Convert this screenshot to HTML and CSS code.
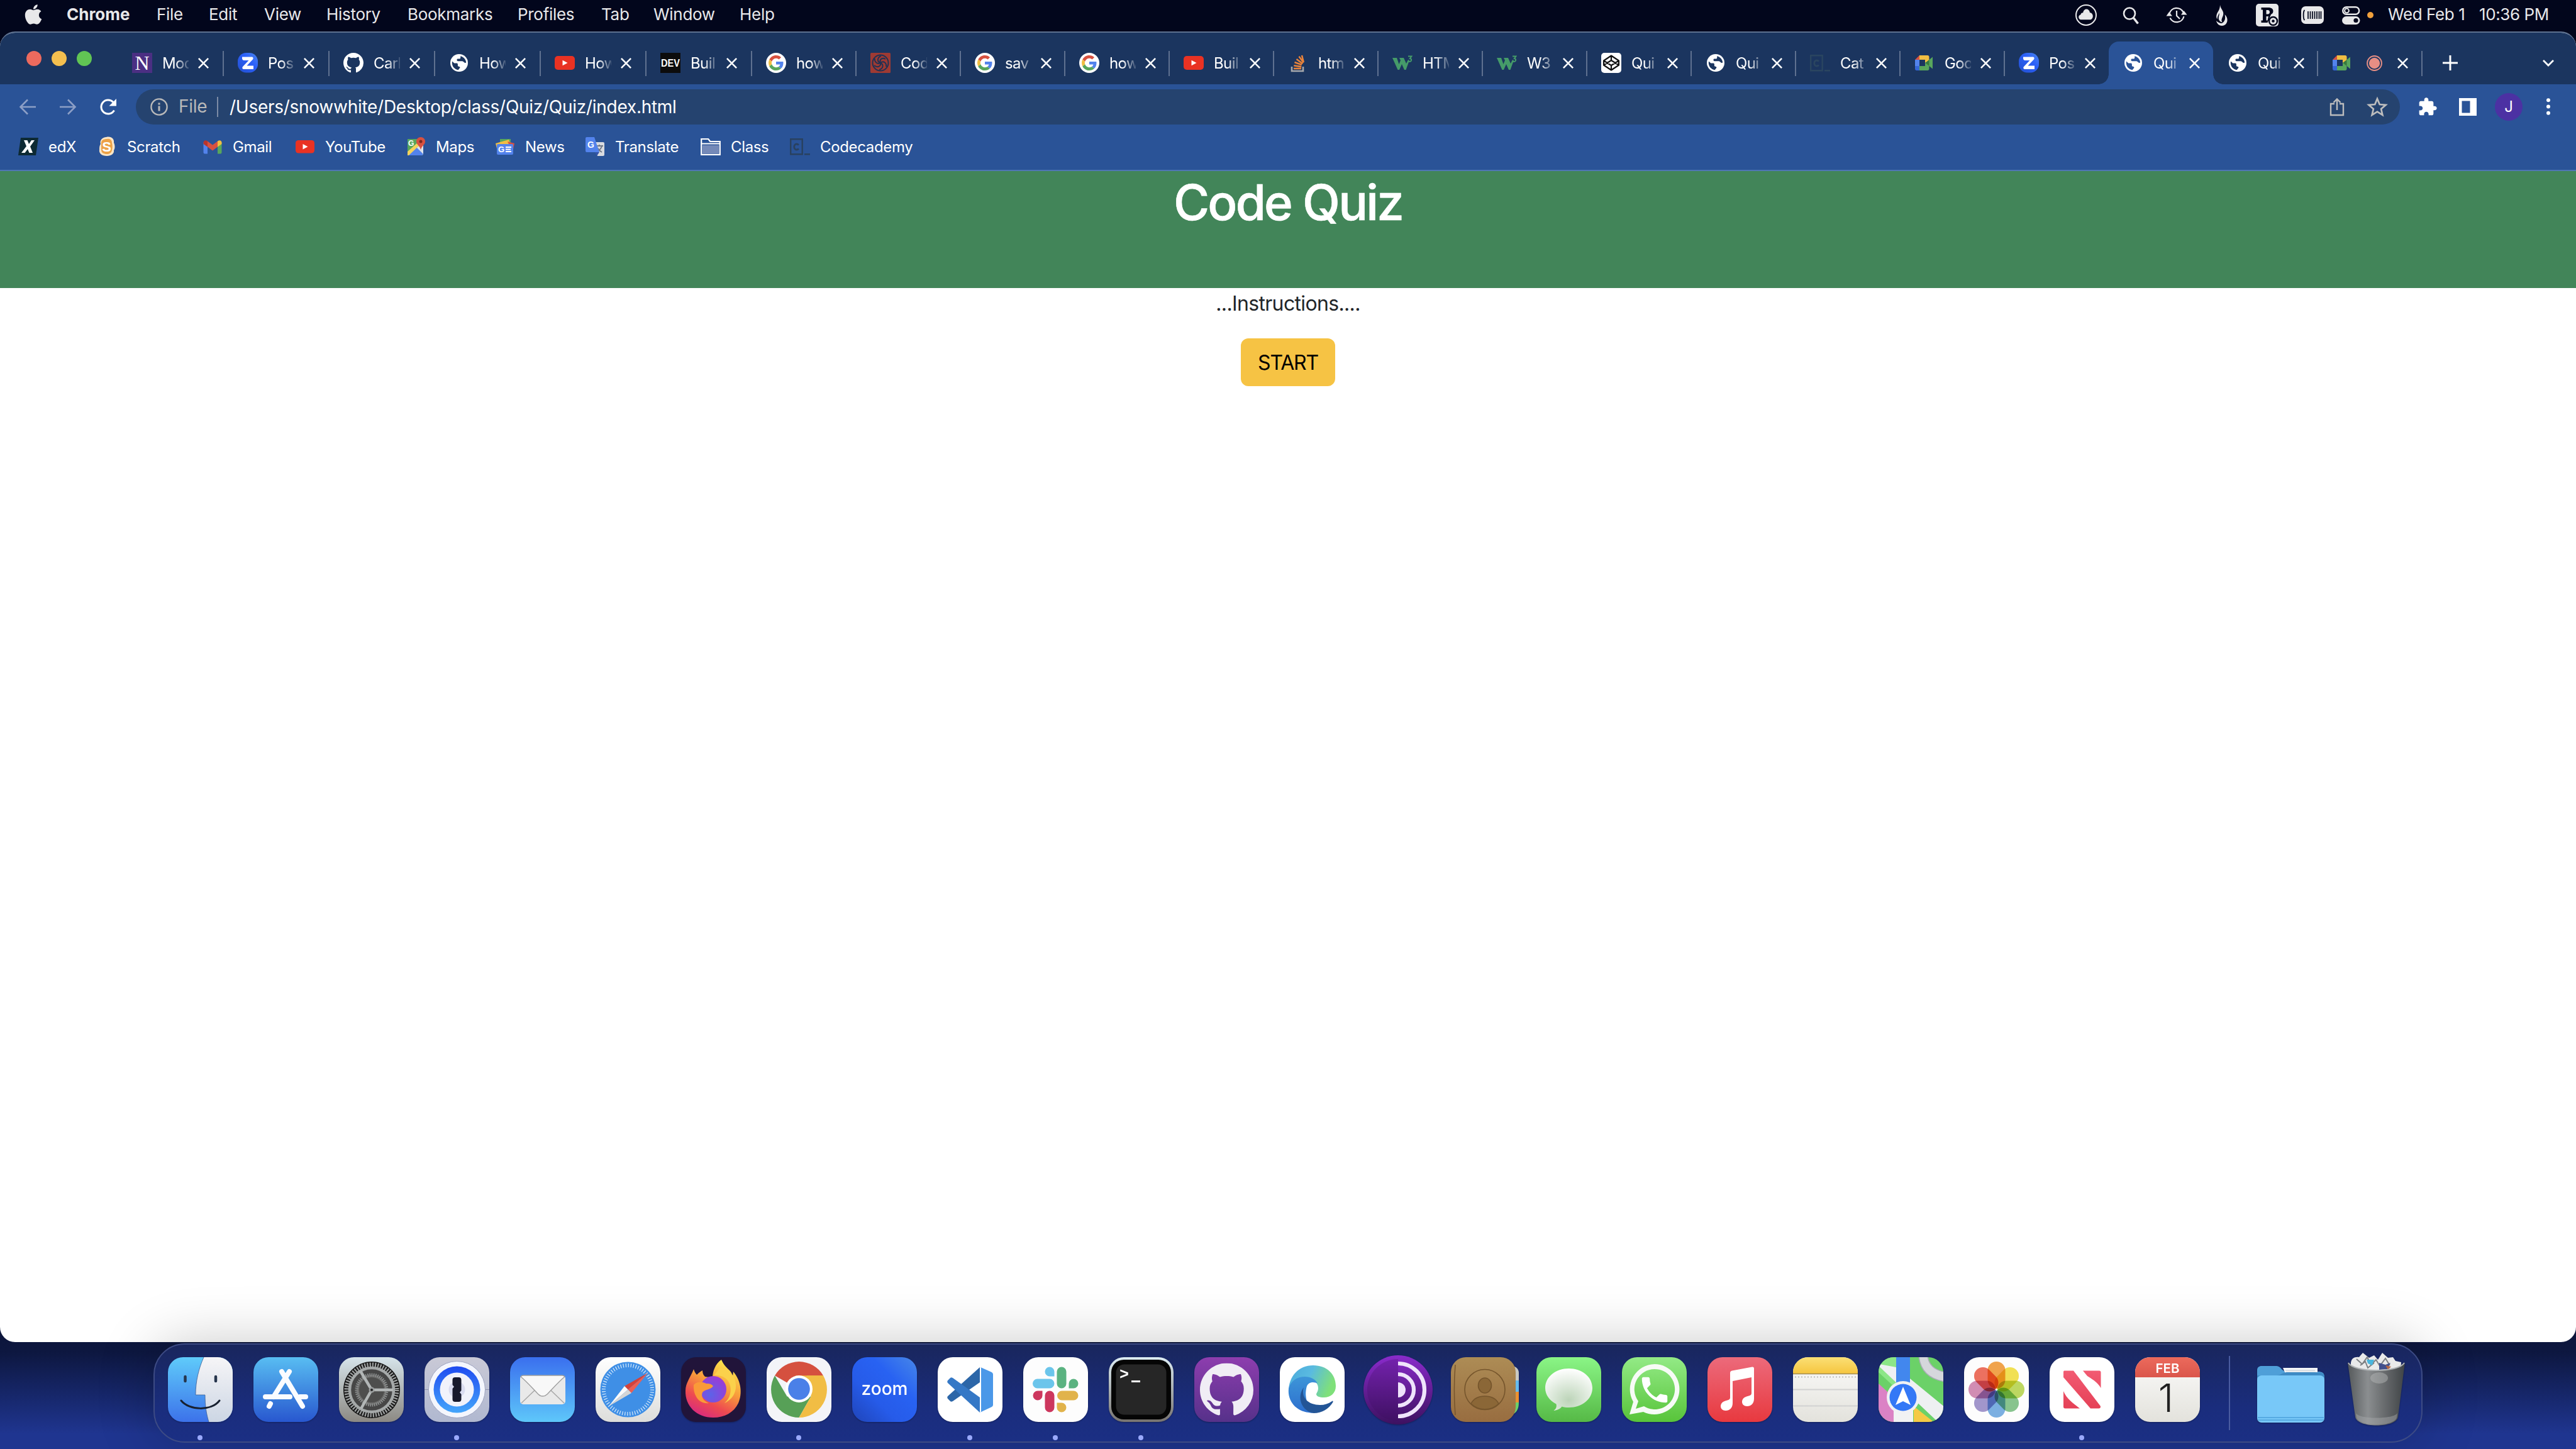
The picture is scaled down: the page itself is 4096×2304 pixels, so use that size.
FILE: index.html
```html
<!DOCTYPE html>
<html lang="en">
<head>
<meta charset="utf-8">
<title>Code Quiz</title>
<link rel="stylesheet" href="styles.css">
</head>
<body>
<svg class="defs" aria-hidden="true">
  <defs>
    <linearGradient id="gFinder" x1="0" y1="0" x2="0" y2="1"><stop offset="0" stop-color="#5fcbfa"/><stop offset="1" stop-color="#3c72ea"/></linearGradient>
    <linearGradient id="gFace" x1="0" y1="0" x2="0" y2="1"><stop offset="0" stop-color="#f6f5f7"/><stop offset="1" stop-color="#ccd6e4"/></linearGradient>
    <linearGradient id="gStore" x1="0" y1="0" x2="0" y2="1"><stop offset="0" stop-color="#58bdf2"/><stop offset="1" stop-color="#2857cf"/></linearGradient>
    <linearGradient id="gGear" x1="0" y1="0" x2="0" y2="1"><stop offset="0" stop-color="#d6e4ea"/><stop offset="1" stop-color="#8c8983"/></linearGradient>
    <linearGradient id="gPass" x1="0" y1="0" x2="0" y2="1"><stop offset="0" stop-color="#1f4bf0"/><stop offset="1" stop-color="#44a5fb"/></linearGradient>
    <linearGradient id="gPassBg" x1="0" y1="0" x2="0" y2="1"><stop offset="0" stop-color="#c9c9d6"/><stop offset="1" stop-color="#b0b8d0"/></linearGradient>
    <linearGradient id="gMail" x1="0" y1="0" x2="0" y2="1"><stop offset="0" stop-color="#3a6fee"/><stop offset="1" stop-color="#5ec7fa"/></linearGradient>
    <linearGradient id="gPaper" x1="0" y1="0" x2="0" y2="1"><stop offset="0" stop-color="#ffffff"/><stop offset="1" stop-color="#dddddb"/></linearGradient>
    <linearGradient id="gFox" x1=".8" y1="0" x2=".3" y2="1"><stop offset="0" stop-color="#fdf04f"/><stop offset=".45" stop-color="#f89a3b"/><stop offset=".75" stop-color="#ee4a50"/><stop offset="1" stop-color="#d82a80"/></linearGradient>
    <radialGradient id="gOrb" cx=".4" cy=".7" r=".8"><stop offset="0" stop-color="#5d62e8"/><stop offset="1" stop-color="#a436d2"/></radialGradient>
    <linearGradient id="gZed" x1="1" y1="0" x2="0" y2="1"><stop offset="0" stop-color="#4a86ee"/><stop offset=".4" stop-color="#2c60f8"/><stop offset="1" stop-color="#2350cf"/></linearGradient>
    <linearGradient id="gZoom" x1="1" y1="0" x2="0" y2="1"><stop offset="0" stop-color="#4787e8"/><stop offset=".35" stop-color="#2862f2"/><stop offset=".65" stop-color="#265be9"/><stop offset="1" stop-color="#1f44b8"/></linearGradient>
    <linearGradient id="gTerm" x1="0" y1="0" x2="0" y2="1"><stop offset="0" stop-color="#dcecf3"/><stop offset="1" stop-color="#77736f"/></linearGradient>
    <linearGradient id="gHub" x1="0" y1="0" x2="0" y2="1"><stop offset="0" stop-color="#8d3dae"/><stop offset="1" stop-color="#56318a"/></linearGradient>
    <linearGradient id="gEdge" x1="0" y1="0" x2="1" y2=".3"><stop offset="0" stop-color="#4aa9dc"/><stop offset=".5" stop-color="#5abbe0"/><stop offset="1" stop-color="#7fe07a"/></linearGradient>
    <linearGradient id="gEdge2" x1="0" y1="0" x2="0" y2="1"><stop offset="0" stop-color="#3d95d8"/><stop offset="1" stop-color="#2d6fce"/></linearGradient>
    <linearGradient id="gTor" x1="0" y1="0" x2="0" y2="1"><stop offset="0" stop-color="#8a2bcb"/><stop offset="1" stop-color="#3d1160"/></linearGradient>
    <linearGradient id="gBook" x1="0" y1="0" x2="0" y2="1"><stop offset="0" stop-color="#ad8c55"/><stop offset="1" stop-color="#986d40"/></linearGradient>
    <linearGradient id="gMsg" x1="0" y1="0" x2="0" y2="1"><stop offset="0" stop-color="#8af586"/><stop offset="1" stop-color="#56b946"/></linearGradient>
    <radialGradient id="gBubble" cx=".5" cy=".75" r=".75"><stop offset="0" stop-color="#bcd4b8"/><stop offset="1" stop-color="#ffffff"/></radialGradient>
    <linearGradient id="gWa" x1="0" y1="0" x2="0" y2="1"><stop offset="0" stop-color="#93ea86"/><stop offset="1" stop-color="#58c43a"/></linearGradient>
    <linearGradient id="gMusic" x1="0" y1="0" x2="0" y2="1"><stop offset="0" stop-color="#ec6a7b"/><stop offset="1" stop-color="#e8393f"/></linearGradient>
    <linearGradient id="gNote" x1="0" y1="0" x2="0" y2="1"><stop offset="0" stop-color="#fadf75"/><stop offset="1" stop-color="#f6c63f"/></linearGradient>
    <linearGradient id="gSheet" x1="0" y1="0" x2="0" y2="1"><stop offset="0" stop-color="#fbfbfa"/><stop offset="1" stop-color="#e3e2dc"/></linearGradient>
    <linearGradient id="gNews" x1="0" y1="0" x2="0" y2="1"><stop offset="0" stop-color="#f25b72"/><stop offset="1" stop-color="#e54157"/></linearGradient>
    <linearGradient id="gCal" x1="0" y1="0" x2="0" y2="1"><stop offset="0" stop-color="#ec6a5c"/><stop offset="1" stop-color="#da564b"/></linearGradient>
    <linearGradient id="gTrash" x1="0" y1="0" x2="1" y2="0"><stop offset="0" stop-color="#55595b"/><stop offset=".35" stop-color="#8b8e90"/><stop offset=".6" stop-color="#6d7072"/><stop offset="1" stop-color="#3f4346"/></linearGradient>
    <clipPath id="tile"><rect width="103" height="103" rx="24"/></clipPath>
  </defs>

  <symbol id="globe" viewBox="2 2 20 20"><circle cx="12" cy="12" r="10" fill="#fff"/><path class="hole" d="M11 20c-4-.5-7-3.900-7-8 0-.6.100-1.200.200-1.800L6.500 12.300H9c1 0 1.500.4 1.500 1.400v1.400c0 .7.400 1 1.200 1 .9 0 1.300.6 1.300 1.400zM9.500 8.600c0-.8.400-1.200 1.200-1.200h1.600c.8 0 1.300-.5 1.300-1.300V4.300c3.600.8 6.200 3.800 6.400 7.400-.8.500-1.500.5-2.200-.2l-1-1c-.4-.4-.8-.5-1.300-.5h-4.800c-.8 0-1.200-.5-1.200-1.400z"/></symbol>
  <symbol id="yt" viewBox="0 0 32 32"><rect y="5" width="32" height="22" rx="5" fill="#e93223"/><path d="M12.500 11.800v8.400l8-4.200z" fill="#fff"/></symbol>
  <symbol id="google" viewBox="0 0 32 32"><circle cx="16" cy="16" r="16" fill="#fff"/><g transform="translate(4 4)"><path fill="#d85140" d="M12 4.750c1.770 0 3.350.61 4.600 1.800l3.420-3.420C17.950 1.190 15.240 0 12 0 7.310 0 3.250 2.690 1.280 6.610l3.980 3.090C6.220 6.860 8.870 4.750 12 4.750z"/><path fill="#5383ec" d="M23.490 12.270c0-.79-.07-1.540-.19-2.270H12v4.510h6.470c-.29 1.480-1.140 2.730-2.400 3.580l3.860 3c2.260-2.090 3.560-5.170 3.560-8.820z"/><path fill="#f1be42" d="M5.270 14.290c-.25-.72-.38-1.490-.38-2.290s.14-1.570.38-2.290L1.280 6.610A11.900 11.900 0 0 0 0 12c0 1.940.46 3.770 1.280 5.390z"/><path fill="#58a65c" d="M12 24c3.240 0 5.950-1.060 7.930-2.910l-3.860-3c-1.080.72-2.450 1.160-4.070 1.160-3.130 0-5.780-2.110-6.730-4.960l-3.980 3.090C3.250 21.300 7.310 24 12 24z"/></g></symbol>
  <symbol id="octocat" viewBox="0 0 16 16"><path d="M8 0C3.580 0 0 3.580 0 8c0 3.540 2.290 6.530 5.470 7.590.4.07.55-.17.55-.38 0-.19-.01-.82-.01-1.490-2.010.37-2.530-.49-2.690-.94-.09-.23-.48-.94-.82-1.130-.28-.15-.68-.52-.01-.53.63-.01 1.080.58 1.230.82.72 1.210 1.870.87 2.330.66.07-.52.28-.87.51-1.070-1.780-.2-3.640-.89-3.640-3.950 0-.87.31-1.590.82-2.150-.08-.2-.36-1.020.08-2.120 0 0 .67-.21 2.200.82.64-.18 1.320-.27 2-.27s1.360.09 2 .27c1.530-1.040 2.200-.82 2.200-.82.44 1.100.16 1.920.08 2.120.51.56.82 1.270.82 2.150 0 3.070-1.870 3.750-3.650 3.950.29.25.54.73.54 1.480 0 1.070-.01 1.930-.01 2.200 0 .21.15.46.55.38A8.010 8.010 0 0 0 16 8c0-4.420-3.580-8-8-8z"/></symbol>
  <symbol id="zed" viewBox="0 0 32 32"><rect width="32" height="31.500" rx="13.500" fill="url(#gZed)"/><path d="M7 6.500h15c2.500 0 3.300 2 2 4L14.500 20.500H25v5.500H10c-2.500 0-3.500-2-2-4L17.500 12H10c-2 0-3-1.500-3-3z" fill="#fff"/></symbol>
  <symbol id="nw" viewBox="0 0 32 32"><rect width="32" height="32" fill="#4b2f83"/><text x="16" y="26.500" text-anchor="middle" font-family="Liberation Serif, serif" font-size="32" fill="#fff">N</text></symbol>
  <symbol id="dev" viewBox="0 0 32 32"><rect width="32" height="32" fill="#0c0c0c"/><text x="16" y="21.500" text-anchor="middle" textLength="30" lengthAdjust="spacingAndGlyphs" font-family="Liberation Sans, sans-serif" font-weight="700" font-size="16" fill="#fff">DEV</text></symbol>
  <symbol id="knot" viewBox="0 0 32 32"><rect width="32" height="32" rx="1.500" fill="#9e3a33"/><g fill="none" stroke="#1f3154" stroke-width="2"><circle cx="16" cy="16" r="12.500"/><path d="M16 16c-2-6 3-9 8-6M16 16c5-4 10 0 9 6M16 16c6 3 4 9-2 11M16 16c1 6-5 8-10 4M16 16c-5 3-10-2-9-7M16 16c-6-2-5-9 1-11"/></g></symbol>
  <symbol id="stack" viewBox="0 0 32 32"><path d="M6 22v7h18v-7" fill="none" stroke="#a7a9ac" stroke-width="2.600"/><g stroke="#e9833a" stroke-width="2.600"><path d="M9 25h12M9.300 20.300l12 1.800M10.500 15l11.300 4M13.500 10l9.800 7.200M17.500 5.800l7.200 9.700M22 4l2.800 11"/></g></symbol>
  <symbol id="w3" viewBox="0 0 32 32"><path d="M0 8h7l3.500 10L13 12l-2-4h7l4 9 3-6 2 1-5.500 15h-2.500L15 18l-4 9H8.500z" fill="#459b69"/><path d="M25 5.500h5.500L28 9c3 0 3 5-1 5-1 0-2-.3-2.500-1" fill="none" stroke="#459b69" stroke-width="2"/></symbol>
  <symbol id="pen" viewBox="0 0 32 32"><rect width="32" height="32" rx="5" fill="#fff"/><path d="M16 4.500L28 12.500v7L16 27.500 4 19.500v-7zM16 4.500V12M16 20v7.500M4 12.500L16 20l12-7.500M4 19.500L16 12l12 7.500" fill="none" stroke="#111" stroke-width="2.200" stroke-linejoin="round"/></symbol>
  <symbol id="cc" viewBox="0 0 32 32"><path d="M1.200 4.200h18.500v24H1.200z" fill="none" stroke="currentColor" stroke-width="2.400"/><path d="M23 28.200h9" stroke="currentColor" stroke-width="2.400"/><path d="M14 13.500c-1-1-2-1.500-3.300-1.500-5.200 0-5.200 9 0 9 1.300 0 2.300-.5 3.300-1.500" fill="none" stroke="currentColor" stroke-width="2.800"/></symbol>
  <symbol id="meet" viewBox="0 0 32 32"><path d="M1 11l7-7v7z" fill="#d85140"/><path d="M8 4h13c1.500 0 2.500 1 2.500 2.500V12L17 16v-5H8z" fill="#f1be42"/><path d="M1 11h7v10H1z" fill="#5383ec"/><path d="M1 21h7v7H3.500C2 28 1 27 1 25.500z" fill="#3567d6"/><path d="M8 21h9v-5l6.500-4v13.500c0 1.500-1 2.500-2.500 2.500H8z" fill="#58a65c"/><path d="M17.500 16l11.500-9.500v19z" fill="#58a65c"/><path d="M17.500 16l6-5v10z" fill="#38783d"/></symbol>
  <symbol id="close" viewBox="0 0 20 20"><path d="M2 2l16 16M18 2L2 18" stroke="#fff" stroke-width="2.700"/></symbol>
</svg>

<header class="menubar">
  <svg class="apple" viewBox="0 0 384 512"><path d="M318.700 268.700c-.2-36.700 16.400-64.400 50-84.800-18.800-26.900-47.200-41.700-84.700-44.600-35.500-2.800-74.300 20.700-88.500 20.700-15 0-49.400-19.700-76.400-19.700C63.300 141.200 4 184.800 4 273.500q0 39.300 14.400 81.200c12.800 36.700 59 126.700 107.200 125.200 25.200-.6 43-17.900 75.800-17.900 31.800 0 48.300 17.900 76.400 17.900 48.600-.7 90.400-82.500 102.600-119.300-65.200-30.700-61.700-90-61.700-91.900zm-56.600-164.200c27.300-32.400 24.800-61.900 24-72.500-24.100 1.400-52 16.400-67.900 34.900-17.500 19.800-27.800 44.300-25.600 71.900 26.100 2 49.900-11.400 69.500-34.300z"/></svg>
  <nav class="menus"><span class="app-name">Chrome</span><span>File</span><span>Edit</span><span>View</span><span>History</span><span>Bookmarks</span><span>Profiles</span><span>Tab</span><span>Window</span><span>Help</span></nav>
  <div class="status">
    <svg viewBox="0 0 36 36"><circle cx="18" cy="18" r="16" fill="none" stroke="#e8e8ea" stroke-width="2"/><path d="M9.500 25.200c-4.500-1-4.300-7.200 0-8 .3-2 1.800-3 3.600-2.800C14.500 6.500 23 7 24 14c6 .5 6.500 10 1 11.200z" fill="#e8e8ea"/></svg>
    <svg viewBox="0 0 36 36"><g fill="none" stroke="#e8e8ea" stroke-width="2.600"><circle cx="15" cy="15.500" r="9"/><path d="M21.500 22.500l7 9" stroke-width="3.600"/></g></svg>
    <svg viewBox="0 0 36 36"><g fill="none" stroke="#e8e8ea" stroke-width="2.200"><path d="M6.500 16A11.700 11.700 0 0 1 28.500 13.500M29.500 20A11.700 11.700 0 0 1 7.500 22.500M18 11v8l5 5"/></g><path d="M1.500 19.500h9.500l-5-6.500zM25 17.500h9.500l-5-6.500z" fill="#e8e8ea"/></svg>
    <svg viewBox="0 0 36 36"><path d="M15 1.500c.5 5 4 8 5 12 1 4-1 7-2 10-1 2-.5 4 .5 6-4-1-6.500-4-5.500-9 .5-2 1-4 1-6-2 3-3.500 7-3.500 10-3-5 0-10 2.500-14 1.500-3 2-6 2-9zM22.500 17c3 3 4.500 6 4 10-.5 5-4.500 8-8.500 8s-8-3-9-8c2 2 5 4 9 4 5-3 6-8 4.500-14z" fill="#e8e8ea"/></svg>
    <svg viewBox="0 0 36 36"><rect width="36" height="36" rx="5" fill="#e8e8ea"/><path d="M8.500 6h11c5.500 0 8 2.200 8 5.800 0 2.500-1.300 4.300-3.500 5.200l-5.500 13H8.500v-3.500h2.500v-17H8.500zm8 4v6.500h2.500c2 0 3-1.200 3-3.200S21 10 19 10zm0 10v6.500h2l1.500-6.500z" fill="#02061c" fill-rule="evenodd"/><circle cx="27.500" cy="27.500" r="6.500" fill="#e8e8ea" stroke="#02061c" stroke-width="2.500"/><circle cx="27.500" cy="27.500" r="2.300" fill="#02061c"/></svg>
    <svg viewBox="0 0 36 36"><rect y="4" width="36" height="28" rx="7" fill="#e8e8ea"/><path d="M5.500 10C3 12 3 24 5.500 26" fill="none" stroke="#02061c" stroke-width="1.800"/><path d="M11 12v12M14.500 12v12M18 12v12M21.500 12v12M25 12v12M28.500 12v12M31.500 12v12" stroke="#02061c" stroke-width="1.700"/></svg>
    <svg class="toggles" viewBox="0 0 36 36"><rect x="4.200" y="5.200" width="26" height="11.600" rx="5.800" fill="none" stroke="#e8e8ea" stroke-width="2.400"/><circle cx="10.500" cy="11" r="3.400" fill="none" stroke="#e8e8ea" stroke-width="2"/><rect x="3" y="20" width="28.500" height="13" rx="6.500" fill="#e8e8ea"/><circle cx="25" cy="26.500" r="3.600" fill="#02061c"/></svg>
    <i class="dot"></i>
    <span class="date">Wed Feb 1</span><span class="time">10:36 PM</span>
  </div>
</header>

<main class="window">
  <div class="tabstrip">
    <div class="lights"><i class="red"></i><i class="amber"></i><i class="lime"></i></div>
    <div class="tabs">
      <div class="tab"><svg><use href="#nw"/></svg><span>Mod</span><svg class="x"><use href="#close"/></svg></div>
      <div class="tab"><svg><use href="#zed"/></svg><span>Pos</span><svg class="x"><use href="#close"/></svg></div>
      <div class="tab"><svg class="white"><use href="#octocat"/></svg><span>Carl</span><svg class="x"><use href="#close"/></svg></div>
      <div class="tab"><svg class="globe"><use href="#globe"/></svg><span>How</span><svg class="x"><use href="#close"/></svg></div>
      <div class="tab"><svg><use href="#yt"/></svg><span>How</span><svg class="x"><use href="#close"/></svg></div>
      <div class="tab"><svg><use href="#dev"/></svg><span>Buil</span><svg class="x"><use href="#close"/></svg></div>
      <div class="tab"><svg><use href="#google"/></svg><span>how</span><svg class="x"><use href="#close"/></svg></div>
      <div class="tab"><svg><use href="#knot"/></svg><span>Cod</span><svg class="x"><use href="#close"/></svg></div>
      <div class="tab"><svg><use href="#google"/></svg><span>sav</span><svg class="x"><use href="#close"/></svg></div>
      <div class="tab"><svg><use href="#google"/></svg><span>how</span><svg class="x"><use href="#close"/></svg></div>
      <div class="tab"><svg><use href="#yt"/></svg><span>Buil</span><svg class="x"><use href="#close"/></svg></div>
      <div class="tab"><svg><use href="#stack"/></svg><span>htm</span><svg class="x"><use href="#close"/></svg></div>
      <div class="tab"><svg><use href="#w3"/></svg><span>HTM</span><svg class="x"><use href="#close"/></svg></div>
      <div class="tab"><svg><use href="#w3"/></svg><span>W3</span><svg class="x"><use href="#close"/></svg></div>
      <div class="tab"><svg><use href="#pen"/></svg><span>Qui</span><svg class="x"><use href="#close"/></svg></div>
      <div class="tab"><svg class="globe"><use href="#globe"/></svg><span>Qui</span><svg class="x"><use href="#close"/></svg></div>
      <div class="tab"><svg class="faint"><use href="#cc"/></svg><span>Cat</span><svg class="x"><use href="#close"/></svg></div>
      <div class="tab"><svg><use href="#meet"/></svg><span>Goo</span><svg class="x"><use href="#close"/></svg></div>
      <div class="tab plain"><svg><use href="#zed"/></svg><span>Pos</span><svg class="x"><use href="#close"/></svg></div>
      <div class="tab active"><svg class="globe"><use href="#globe"/></svg><span>Qui</span><svg class="x"><use href="#close"/></svg></div>
      <div class="tab"><svg class="globe"><use href="#globe"/></svg><span>Qui</span><svg class="x"><use href="#close"/></svg></div>
      <div class="tab recording"><svg><use href="#meet"/></svg><svg class="rec" viewBox="0 0 24 24"><circle cx="12" cy="12" r="11" fill="none" stroke="#e68e84" stroke-width="1.800"/><circle cx="12" cy="12" r="8.300" fill="#e68e84"/></svg><svg class="x"><use href="#close"/></svg></div>
    </div>
    <svg class="plus" viewBox="0 0 24 24"><path d="M12 0v24M0 12h24" stroke="#fff" stroke-width="3"/></svg>
    <svg class="chev" viewBox="0 0 20 12"><path d="M2 2l8 8 8-8" fill="none" stroke="#fff" stroke-width="2.800"/></svg>
  </div>

  <div class="toolbar">
    <div class="nav">
      <svg class="dim" viewBox="0 0 28 28"><path d="M27 14H3M14 2.500L2.500 14 14 25.500"/></svg>
      <svg class="dim" viewBox="0 0 28 28"><path d="M1 14h24M14 2.500L25.500 14 14 25.500"/></svg>
      <svg viewBox="0 0 28 28"><path d="M23.500 19.500A11 11 0 1 1 22 6.500" fill="none" stroke="#fff" stroke-width="3"/><path d="M27 1v11.500H15.500z" fill="#fff"/></svg>
    </div>
    <div class="omnibox">
      <svg class="info" viewBox="0 0 28 28"><circle cx="14" cy="14" r="12.600" fill="none" stroke="#b9b9b9" stroke-width="2.400"/><path d="M14 12.500v8M14 7.500v3" stroke="#b9b9b9" stroke-width="3"/></svg>
      <span class="scheme">File</span>
      <span class="url">/Users/snowwhite/Desktop/class/Quiz/Quiz/index.html</span>
      <svg class="share" viewBox="0 0 24 30"><path d="M8 10H2v18h20V10h-6M12 20V3M6.500 8L12 2.500 17.500 8" fill="none" stroke="#bdbdbd" stroke-width="2.400"/></svg>
      <svg class="star" viewBox="0 0 30 30"><path d="M15 3.500l3.300 8 8.700.7-6.600 5.700 2 8.500L15 21.800l-7.400 4.600 2-8.500L3 12.200l8.700-.7z" fill="none" stroke="#bdbdbd" stroke-width="2.400"/></svg>
    </div>
    <svg class="puzzle" viewBox="0 0 24 24"><path d="M20.500 11H19V7c0-1.100-.9-2-2-2h-4V3.500C13 2.120 11.880 1 10.500 1S8 2.120 8 3.500V5H4c-1.100 0-1.990.9-1.990 2v3.800H3.500c1.490 0 2.700 1.210 2.700 2.700s-1.210 2.700-2.700 2.700H2V20c0 1.100.9 2 2 2h3.800v-1.500c0-1.490 1.210-2.700 2.700-2.700 1.490 0 2.700 1.210 2.700 2.700V22H17c1.100 0 2-.9 2-2v-4h1.500c1.380 0 2.500-1.120 2.500-2.500S21.880 11 20.500 11z" fill="#fff"/></svg>
    <svg class="panel" viewBox="0 0 28 28"><path fill-rule="evenodd" d="M0 0h28v28H0zM4.500 4.500v19h13v-19z" fill="#fff"/></svg>
    <span class="avatar">J</span>
    <svg class="more" viewBox="0 0 6 28"><g fill="#fff"><circle cx="3" cy="3.200" r="3"/><circle cx="3" cy="13.500" r="3"/><circle cx="3" cy="23.800" r="3"/></g></svg>
  </div>

  <nav class="bookmarks">
    <a><svg viewBox="0 0 32 32"><path d="M4 2h28l-4 28H0z" fill="#0d2a33"/><path d="M9 6h5.500l2.500 6 4-6h5l-7 10 4 10h-5.500L15 20l-4.500 6H5l8-10.500z" fill="#fff"/></svg>edX</a>
    <a><svg viewBox="0 0 32 32"><path d="M15 1c8-2 13 3 12 9 2 4 2 9 0 12 1 5-4 9-11 9-8 0-13-4-12-10 0-4 0-6 2-9-2-6 3-11 9-11z" fill="#fbe6c6"/><path d="M16 4c5-1 8 2 8 6 1 4 1 8 0 12-1 4-4 6-8 6-5 0-9-2-9-7V10c0-4 4-6 9-6z" fill="#eda247"/><text x="15.500" y="23.500" text-anchor="middle" font-family="Liberation Sans, sans-serif" font-weight="700" font-size="22" fill="#fff">S</text></svg>Scratch</a>
    <a><svg viewBox="0 0 32 32"><path d="M1.500 9L8 14v13.500H3.500c-1 0-2-1-2-2z" fill="#5383ec"/><path d="M30.500 9L24 14v13.500h4.500c1 0 2-1 2-2z" fill="#58a65c"/><path d="M24 7.500c3-2.500 6.500-1 6.500 2V12L24 16.500z" fill="#f1be42"/><path d="M1.500 9.500c0-3 3.500-4.500 6.500-2v9L1.500 12z" fill="#b8352b"/><path d="M8 7.500l8 6 8-6v9l-8 6-8-6z" fill="#d85140"/></svg>Gmail</a>
    <a><svg viewBox="0 0 32 32"><rect x="1" y="6" width="30" height="20.500" rx="4.500" fill="#e93223"/><path d="M12.500 12v8.500l8-4.200z" fill="#fff"/></svg>YouTube</a>
    <a><svg viewBox="0 0 32 32"><path d="M3 4h25v24l-2 2H3z" fill="#58a65c"/><path d="M3 30L28 9v19l-2 2z" fill="#dfe3e8"/><path d="M3 26l12-11 13 13-2 2H3z" fill="#5383ec"/><path d="M3 24L20 9l3 4L5 30H3z" fill="#f5d35b"/><path d="M24 1c4 0 7 3 7 7 0 5-5 6-7 13-2-7-7-8-7-13 0-4 3-7 7-7z" fill="#d85140"/><circle cx="24" cy="8" r="2.500" fill="#7c2a21"/><text x="4" y="15" font-family="Liberation Sans, sans-serif" font-weight="700" font-size="12" fill="#fff">G</text></svg>Maps</a>
    <a><svg viewBox="0 0 32 32"><path d="M8 4h17v10H8z" fill="#58a65c"/><path d="M1 11l21-6 3 9-22 5z" fill="#f1be42"/><path d="M20 8l11 3-3 14z" fill="#d85140"/><rect x="3" y="12" width="26" height="17" rx="2" fill="#5383ec"/><text x="5" y="25" font-family="Liberation Sans, sans-serif" font-weight="700" font-size="13" fill="#fff">G</text><path d="M17 17h9M17 20.500h8M17 24h9" stroke="#fff" stroke-width="1.800"/></svg>News</a>
    <a><svg viewBox="0 0 32 32"><path d="M12 9h17a2 2 0 0 1 2 2v18a2 2 0 0 1-2 2H20z" fill="#d9dbe0"/><path d="M18 15h11M23 13v3M27 15c-1 5-4 7-8 10M20 18c2 4 5 6 7 7" fill="none" stroke="#6d7787" stroke-width="1.800"/><path d="M3 1h12l8 24H3a2 2 0 0 1-2-2V3a2 2 0 0 1 2-2z" fill="#5383ec"/><path d="M16 25h7l-4 6z" fill="#3454a8"/><text x="4" y="18" font-family="Liberation Sans, sans-serif" font-weight="700" font-size="14" fill="#fff">G</text></svg>Translate</a>
    <a><svg viewBox="0 0 32 32"><path d="M1.200 4h11l3 4H30.800v20.800H1.200zM1.200 11.500h29.600" fill="none" stroke="#fff" stroke-width="2.200"/><path d="M3 14h26v13H3z" fill="#7489b8"/></svg>Class</a>
    <a><svg class="muted"><use href="#cc"/></svg>Codecademy</a>
  </nav>

  <section class="page">
    <div class="banner"><h1>Code Quiz</h1></div>
    <p>...Instructions....</p>
    <button>START</button>
  </section>
</main>

<footer class="dock">
  <div class="app running"><svg viewBox="0 0 103 103"><g clip-path="url(#tile)"><path d="M0 0h103v103H0z" fill="url(#gFinder)"/><path d="M57 0c-8 18-13 38-13 60h15c0 16 2 30 6 43h40V0z" fill="url(#gFace)"/><path d="M57 0c-8 18-13 38-13 60h15c0 16 2 30 6 43" fill="none" stroke="#3d5f94" stroke-width=".8"/><path d="M27.500 31v7M76 31v7" stroke="#26354c" stroke-width="4.500" stroke-linecap="round"/><path d="M21 69c13 16 48 17 61 0" fill="none" stroke="#17202f" stroke-width="3" stroke-linecap="round"/></g></svg></div>
  <div class="app"><svg viewBox="0 0 103 103"><rect width="103" height="103" rx="24" fill="url(#gStore)"/><g stroke="#fbfcff" stroke-width="8" stroke-linecap="round"><path d="M57 23L32 63M27 74l-2 4M45 23l33 55M19 63h39M74 63h9"/></g></svg></div>
  <div class="app"><svg viewBox="0 0 103 103"><rect width="103" height="103" rx="24" fill="url(#gGear)"/><circle cx="52" cy="52" r="45" fill="#161616"/><circle cx="52" cy="52" r="40" fill="none" stroke="#9c9f9f" stroke-width="7" stroke-dasharray="2.200 2"/><circle cx="52" cy="52" r="35" fill="#464646" stroke="#a5a9a9" stroke-width="4.500"/><circle cx="52" cy="52" r="24" fill="#6b6b6a" stroke="#8e9191" stroke-width="5" stroke-dasharray="1.600 1.600"/><circle cx="52" cy="52" r="20" fill="#4e4e4d"/><path d="M52 52h34M52 52L34 22M52 52L35 82" stroke="#b2b6b6" stroke-width="4.500"/><circle cx="52" cy="52" r="4.500" fill="#9a9d9d"/><circle cx="52" cy="52" r="2" fill="#222"/></svg></div>
  <div class="app running"><svg viewBox="0 0 103 103"><rect width="103" height="103" rx="24" fill="url(#gPassBg)"/><path d="M0 51.500h103" stroke="#8f93ac"/><circle cx="51.500" cy="51.500" r="45" fill="#f4f6fd" stroke="#9da3bf"/><circle cx="51.500" cy="51.500" r="37" fill="url(#gPass)"/><circle cx="51.500" cy="51.500" r="27" fill="#f1f2fb"/><circle cx="51.500" cy="51.500" r="13" fill="#dadcf0"/><path d="M48.500 32h6c2.500 0 4 1.500 4 4v17l-2.500 3 2.500 3v8c0 2.500-1.500 4-4 4h-6c-2.500 0-4-1.500-4-4V50l2.500-3-2.500-3v-8c0-2.500 1.500-4 4-4z" fill="#17192c"/></svg></div>
  <div class="app"><svg viewBox="0 0 103 103"><rect width="103" height="103" rx="24" fill="url(#gMail)"/><rect x="16" y="29" width="72" height="46" rx="5" fill="#e9e9e9"/><path d="M18 73l25-24M86 73L61 49" stroke="#a9a9a9" stroke-width="1.600"/><path d="M17 31c10 8 21 21 28 28 4 4 10 4 14 0 7-7 18-20 28-28-1-1.500-2-2-4-2H21c-2 0-3 .5-4 2z" fill="#f8f8f8" stroke="#9e9e9e" stroke-width="1.400"/></svg></div>
  <div class="app"><svg viewBox="0 0 103 103"><rect width="103" height="103" rx="24" fill="url(#gPaper)"/><circle cx="51.500" cy="51.500" r="44" fill="#3f8fe6"/><circle cx="51.500" cy="51.500" r="38.500" fill="none" stroke="#d8ebfb" stroke-width="6" stroke-dasharray="1.200 2.830"/><path d="M83 25L46 46l5.500 5.500z" fill="#d3423b"/><path d="M83 25L57 57l-5.500-5.500z" fill="#ea5f54"/><path d="M21 78l25-32 5.500 5.500z" fill="#fafafa"/><path d="M21 78l36-21-5.500-5.500z" fill="#d5d5d5"/></svg></div>
  <div class="app"><svg viewBox="0 0 103 103"><rect width="103" height="103" rx="24" fill="#21143a"/><path d="M64 4c4 9 8 12 13 17 3 3 4 6 5 9l1-7c12 14 15 34 8 50-7 15-22 23-40 23C25 96 6 78 7 53c0-12 8-21 13-34 1 4 3 7 5 9 2-2 5-5 9-7 0 4 1 7 4 10 5 1 9 1 12 2 0-10 4-22 14-29z" fill="url(#gFox)"/><circle cx="51" cy="51" r="21" fill="url(#gOrb)"/><path d="M20 44c6-6 14-5 20-2 4 0 8 0 11 4-4 6-14 5-17 10-3 7 2 14 10 17-16 2-25-13-24-29z" fill="#fa9a38"/><path d="M52 29c12-1 21 4 25 13 4 11 1 24-8 31 17-8 22-25 15-41-5-10-16-15-23-14z" fill="#fbd14b"/></svg></div>
  <div class="app running"><svg viewBox="0 0 103 103"><rect width="103" height="103" rx="24" fill="#f3f4f8"/><path d="M51.500 51.500L13 29.300a44.500 44.500 0 0 1 77 0z" fill="#d5503f"/><path d="M13 29.300a44.500 44.500 0 0 0 38.500 66.700l19-33.500H51.500L32.500 62.500z" fill="#57a057"/><path d="M90 29.300a44.500 44.500 0 0 1-38.500 66.700L70.500 62.500 64 29.300z" fill="#f1bd44"/><path d="M45 29.300h45L70 40z" fill="#f1bd44"/><circle cx="51.500" cy="50.500" r="21.500" fill="#fff"/><circle cx="51.500" cy="50.500" r="17.300" fill="#4a80e8"/></svg></div>
  <div class="app"><svg viewBox="0 0 103 103"><rect width="103" height="103" rx="24" fill="url(#gZoom)"/><text x="51.500" y="59.500" text-anchor="middle" textLength="74" lengthAdjust="spacingAndGlyphs" font-family="Inter, sans-serif" font-weight="500" font-size="29" fill="#fff">zoom</text></svg></div>
  <div class="app running"><svg viewBox="0 0 103 103"><rect width="103" height="103" rx="24" fill="#fff"/><path d="M67 16v24L24 70c-2 1-3 1-4 0l-4-4c-1-1-1-3 0-4z" fill="#2c66a8"/><path d="M67 88V64L24 33c-2-1-3-1-4 0l-4 4c-1 1-1 3 0 4z" fill="#3578c6"/><path d="M67 15.500l18 8c2 1 3 2 3 4v48c0 2-1 3-3 4l-18 8.500c2-1 2-2 2-4V19c0-2 0-3-2-3.500z" fill="#4b98e8"/></svg></div>
  <div class="app running"><svg viewBox="0 0 103 103"><rect width="103" height="103" rx="24" fill="#fdfdfd"/><path d="M42 15.500a7.500 7.500 0 0 1 7.500 7.500v7.500H42a7.500 7.500 0 0 1 0-15zM22.500 34.500H42a7.500 7.500 0 0 1 0 15H22.500a7.500 7.500 0 0 1 0-15z" fill="#6bc5eb"/><path d="M61 15.500a7.500 7.500 0 0 1 7.500 7.500v19a7.500 7.500 0 0 1-15 0V23a7.500 7.500 0 0 1 7.500-7.500zM80 34.500a7.500 7.500 0 0 1 0 15h-7.500V42a7.500 7.500 0 0 1 7.500-7.500z" fill="#5bb381"/><path d="M61.500 53.500H80a7.500 7.500 0 0 1 0 15H61.500a7.500 7.500 0 0 1 0-15zM53.500 72.500H61a7.500 7.500 0 1 1-7.500 7.500z" fill="#e1b34b"/><path d="M23 53.500h7.500V61a7.500 7.500 0 1 1-7.500-7.500zM42 53.500a7.500 7.500 0 0 1 7.500 7.500v19a7.500 7.500 0 0 1-15 0V61a7.500 7.500 0 0 1 7.500-7.500z" fill="#cd375e"/></svg></div>
  <div class="app running"><svg viewBox="0 0 103 103"><rect width="103" height="103" rx="24" fill="url(#gTerm)"/><rect x="4" y="4" width="95" height="95" rx="20" fill="#050505"/><rect x="11.500" y="11.500" width="80" height="80" rx="13" fill="#262626"/><text x="17" y="35" font-family="Liberation Mono, monospace" font-weight="700" font-size="25" fill="#fff">&gt;</text><path d="M36 38.500h14" stroke="#fff" stroke-width="3"/></svg></div>
  <div class="app"><svg viewBox="0 0 103 103"><rect width="103" height="103" rx="24" fill="url(#gHub)"/><g transform="translate(9 9.500)" fill="#f0edf5"><use href="#octocat" width="85" height="85"/></g></svg></div>
  <div class="app"><svg viewBox="0 0 103 103"><rect width="103" height="103" rx="24" fill="#fff"/><path d="M14 55C14 30 30 13 53 13c22 0 36 14 36 33 0 11-8 18-19 18-7 0-12-2-12-5 0-2 3-4 3-10C61 39 51 34 41 34c-15 0-24 10-27 21z" fill="url(#gEdge)"/><path d="M14 50c3-12 13-19 26-19 9 0 17 4 20 11-5-3-14-3-17 4-4 13-2 33 15 41-4 2-8 2-12 1C26 86 12 70 14 50z" fill="url(#gEdge2)"/><path d="M38 48c-5 17 8 28 26 28 7 0 13-2 19-6 1-1 2 0 1.500 1.500C78 82 67 89 54 89 35 86 26 64 38 48z" fill="#235596"/></svg></div>
  <div class="app tor"><svg viewBox="0 0 110 110"><circle cx="55" cy="55" r="55" fill="url(#gTor)"/><path d="M55 6a49 49 0 0 0 0 98z" fill="#3a0a60" opacity=".25"/><g fill="none" stroke="#efe4fb" stroke-width="6.200"><path d="M55 13a42 42 0 0 1 0 84M55 30a25 25 0 0 1 0 50"/></g><path d="M55 43a12 12 0 0 1 0 24z" fill="#efe4fb"/></svg></div>
  <div class="app"><svg viewBox="0 0 103 103"><path d="M96 13c8 2 12 6 12 12v14H98z" fill="#c9c9c4"/><path d="M96 37h12v19H96z" fill="#66bbee"/><path d="M96 55h12v18H96z" fill="#ec9131"/><path d="M96 72h12c0 8-2 14-8 18z" fill="#6cd069"/><rect width="103" height="103" rx="24" fill="url(#gBook)"/><path d="M7 12c-2 25-2 55 0 80" fill="none" stroke="#76542d" stroke-width="1.500"/><g fill="#8b6737" stroke="#75552c" stroke-width="1.600"><circle cx="54" cy="51.500" r="32" fill="none"/><ellipse cx="54" cy="45" rx="10.500" ry="12"/><path d="M32 74c4-8 12-12 22-12s18 4 22 12a32 32 0 0 1-44 0z"/></g></svg></div>
  <div class="app"><svg viewBox="0 0 103 103"><rect width="103" height="103" rx="24" fill="url(#gMsg)"/><path d="M51.500 18C72 18 89 31 89 49S72 80 51.500 80c-4 0-8-.5-11-1.500-3 4-8 6-13 6.500 4-3 5-6 4-10.500C21 69 14 60 14 49c0-18 17-31 37.500-31z" fill="url(#gBubble)"/></svg></div>
  <div class="app"><svg viewBox="0 0 103 103"><rect width="103" height="103" rx="24" fill="url(#gWa)"/><path fill-rule="evenodd" d="M52 11a40 40 0 1 1-18 76L12 91l6-20A40 40 0 0 1 52 11zm0 8a32 32 0 0 0-26 51l-4 12 13-4a32 32 0 1 0 17-59z" fill="#f7fbf6"/><path transform="translate(25 25) scale(2.250)" d="M6.620 10.790c1.440 2.830 3.760 5.140 6.590 6.590l2.200-2.200c.27-.27.67-.36 1.020-.24 1.120.37 2.330.57 3.570.57.55 0 1 .45 1 1V20c0 .55-.45 1-1 1-9.390 0-17-7.610-17-17 0-.55.45-1 1-1h3.500c.55 0 1 .45 1 1 0 1.250.2 2.450.57 3.570.11.35.03.74-.25 1.020z" fill="#fff"/></svg></div>
  <div class="app"><svg viewBox="0 0 103 103"><rect width="103" height="103" rx="24" fill="url(#gMusic)"/><path d="M36 25c0-2 1-3 3-3.500L71 15.500c2-.4 3 .6 3 2.500v48c0 8-5 12-11 12-5 0-8-3-8-7 0-5 4-8 9-9 4-1 6-2 6-5V32L40 38v35c0 8-5 12-11 12-5 0-8-3-8-7 0-5 4-8 9-9 4-1 6-2 6-5z" fill="#fff"/></svg></div>
  <div class="app"><svg viewBox="0 0 103 103"><g clip-path="url(#tile)"><path d="M0 0h103v103H0z" fill="url(#gSheet)"/><path d="M0 0h103v26H0z" fill="url(#gNote)"/><path d="M0 26.500h103" stroke="#a48d4f" stroke-width="1.500"/><path d="M3 31.500h100" stroke="#bfbfbc" stroke-width="2" stroke-dasharray="2 3"/><path d="M0 51.500h103M0 77.500h103" stroke="#d2d2d2" stroke-width="2"/></g></svg></div>
  <div class="app"><svg viewBox="0 0 103 103"><g clip-path="url(#tile)"><path d="M0 0h103v103H0z" fill="#6bd168"/><path d="M0 0h28v50L0 24z" fill="#8ce687"/><path d="M-4 10l110 104v-34L28 16z" fill="#eef0f2"/><path d="M0 42l24 22v39H0z" fill="#db82c5"/><path d="M56 78l38 30H56z" fill="#f4ca45"/><path d="M24 45h31v58H24z" fill="#f1f2f3"/><path d="M64-2c2 22 15 37 42 41V24C88 20 80 12 78-2z" fill="#d5d7dc" stroke="#a9adb5" stroke-width="1.500"/><path d="M28 0h22v52H28z" fill="#4287ee"/><circle cx="39" cy="64" r="26" fill="#f0f1f4"/><circle cx="39" cy="64" r="21.500" fill="#3478f6"/><path d="M39 47l12 29-12-6-12 6z" fill="#fff"/></g></svg></div>
  <div class="app"><svg viewBox="0 0 103 103"><rect width="103" height="103" rx="24" fill="#fdfdfd"/><g class="petals"><rect x="37.500" y="7" width="28" height="43" rx="14" fill="#f19a38"/><rect x="37.500" y="7" width="28" height="43" rx="14" fill="#f2df41" transform="rotate(45 51.500 51.500)"/><rect x="37.500" y="7" width="28" height="43" rx="14" fill="#b8d551" transform="rotate(90 51.500 51.500)"/><rect x="37.500" y="7" width="28" height="43" rx="14" fill="#7cc083" transform="rotate(135 51.500 51.500)"/><rect x="37.500" y="7" width="28" height="43" rx="14" fill="#6ea9e0" transform="rotate(180 51.500 51.500)"/><rect x="37.500" y="7" width="28" height="43" rx="14" fill="#998cc8" transform="rotate(225 51.500 51.500)"/><rect x="37.500" y="7" width="28" height="43" rx="14" fill="#cf82ad" transform="rotate(270 51.500 51.500)"/><rect x="37.500" y="7" width="28" height="43" rx="14" fill="#ec6250" transform="rotate(315 51.500 51.500)"/></g></svg></div>
  <div class="app running"><svg viewBox="0 0 103 103"><rect width="103" height="103" rx="24" fill="#fff"/><g fill="url(#gNews)"><path d="M22 24c0-2 .5-2.500 2.500-2.500H38L81 78c0 2.500-.5 3.500-3 3.500H65L22 32z"/><path d="M53 21.500h26c1.500 0 2.500 1 2.500 2.500v25C76 39 66 34 60 30zM22 54c5 12 15 19 26 27.500H24.500c-1.500 0-2.500-1-2.500-2.500z"/></g></svg></div>
  <div class="app"><svg viewBox="0 0 103 103"><g clip-path="url(#tile)"><path d="M0 0h103v103H0z" fill="url(#gSheet)"/><path d="M0 0h103v32H0z" fill="url(#gCal)"/></g><text x="51.500" y="24.500" text-anchor="middle" textLength="38" lengthAdjust="spacingAndGlyphs" font-family="Inter, sans-serif" font-weight="600" font-size="20" fill="#fff">FEB</text><text x="49" y="87" text-anchor="middle" font-family="Inter, sans-serif" font-weight="300" font-size="62" fill="#222">1</text></svg></div>
  <i class="divider"></i>
  <div class="app folder"><svg viewBox="0 0 107 92"><path d="M0 8c0-5 3-7 7-7h24c7 0 8 9 16 9h50c6 0 10 2 10 8v30H0z" fill="#4f9fd8"/><path d="M41 4h55v14H47z" fill="#f5f7f9"/><path d="M45 8h47M46 11h47" stroke="#bac3cc"/><path d="M47 11h50c6 0 10 2 10 8H0v-3h30c8 0 10-5 17-5z" fill="#3e8bc5"/><rect y="16" width="107" height="75" rx="7" fill="#78c8f8"/><path d="M1 83h105M1 87h105" stroke="#57aae2" stroke-width="2"/></svg></div>
  <div class="app trash"><svg viewBox="0 0 91 118"><path d="M5 22C4 10 12 8 18 9l6-7 10 8 8-4 6 7 7-11 9 8 8-1 4 6 9 2-1 13-40 9z" fill="#e9eaea"/><path d="M14 12l9 8 8-11 6 12 8-8 6 10 9-12 7 11M20 22l8-6 4 10 10-8" fill="none" stroke="#7c8083" stroke-width="2"/><path d="M30 13h12l-3 9-7-3z" fill="#49b6de"/><path d="M50 18l10 3 8-3-5 10-13 1z" fill="#41508c"/><path d="M60 22l9 2-5 5z" fill="#b56742"/><path d="M0 17c9 17 82 17 91 0L80 104c-3 18-65 18-68 0z" fill="url(#gTrash)"/><path d="M1 18c9 16 80 16 89 0" fill="none" stroke="#aeb2b4" stroke-width="2"/><ellipse cx="50" cy="42" rx="14" ry="9" fill="#b7babb" opacity=".45"/><path d="M13 98c5 10 60 10 66 0l-1 7c-4 15-60 15-64 0z" fill="#a8abac" opacity=".45"/></svg></div>
</footer>
</body>
</html>
```
FILE: styles.css
```css
* { box-sizing: border-box; }

body {
  margin: 0;
  width: 4096px;
  height: 2304px;
  overflow: hidden;
  display: flex;
  flex-direction: column;
  font-family: Inter, "Liberation Sans", sans-serif;
  background: linear-gradient(#02061c 0, #02061c 90px, #0b1436 2090px, #0d1740 2150px, #1f3590 2280px);
  color: #fff;
}

svg { display: block; flex: none; overflow: visible; }
.defs { position: absolute; width: 0; height: 0; }

/* system menu bar */
.menubar {
  height: 50px;
  flex: none;
  display: flex;
  align-items: center;
  justify-content: space-between;
  padding: 0 0 4px 39px;
  background: #02061c;
  font-size: 26px;
  color: #e8e8ea;
}
.apple { width: 28px; height: 36px; fill: #e8e8ea; }
.menus {
  flex: 1;
  display: grid;
  grid-template-columns: 143px 83px 88px 99px 129px 175px 133px 83px 137px auto;
  padding-left: 39px;
  letter-spacing: -0.3px;
}
.menus, .date, .time { position: relative; top: -1px; }
.app-name { font-weight: 700; letter-spacing: 0; }
.status { display: flex; align-items: center; gap: 36px; padding-top: 2px; }
.status svg { width: 36px; height: 36px; }
.status .toggles { margin-left: -10px; }
.dot { width: 10px; height: 10px; margin-left: -29px; border-radius: 50%; background: #f0a03c; }
.date, .time { white-space: nowrap; letter-spacing: -0.4px; }
.date { width: 127px; margin-left: -13px; margin-top: -2px; }
.time { width: 154px; margin-left: -18px; margin-top: -2px; }

/* browser window */
.window {
  height: 2084px;
  flex: none;
  display: flex;
  flex-direction: column;
  overflow: hidden;
  border-top: 2px solid #5d708f;
  border-radius: 24px;
  background: #fff;
}
.tabstrip {
  height: 82px;
  flex: none;
  display: flex;
  align-items: center;
  padding: 14px 34px 0 42px;
  background: #1b355f;
}
.lights { width: 145px; display: flex; gap: 16px; margin-top: -14px; }
.lights i { width: 24px; height: 24px; border-radius: 50%; }
.red { background: #ec6a5e; }
.amber { background: #f4bf4f; }
.lime { background: #61c554; }
.tabs {
  height: 68px;
  display: grid;
  grid-template-columns: repeat(6, 168px) repeat(16, 166px);
}
.tab {
  position: relative;
  display: flex;
  align-items: center;
  padding-left: 23px;
  font-size: 24px;
  --surface: #1b355f;
}
.tab::after {
  content: "";
  position: absolute;
  right: -1px;
  top: 15px;
  width: 2px;
  height: 40px;
  background: #5f7190;
}
.tab svg { width: 32px; height: 32px; }
.tab .globe { width: 28px; height: 28px; margin: 0 2px; }
.hole { fill: var(--surface); }
.white { fill: #fff; }
.faint { color: #2a4560; }
.muted { color: #29415f; }
.tab span {
  width: 42px;
  margin-left: 16px;
  overflow: hidden;
  white-space: nowrap;
  letter-spacing: -0.6px;
  -webkit-mask-image: linear-gradient(90deg, #000 50%, rgba(0, 0, 0, 0.15));
  mask-image: linear-gradient(90deg, #000 50%, rgba(0, 0, 0, 0.15));
}
.tab .x { width: 19px; height: 19px; margin-left: 14px; }
.tab .rec { width: 25px; height: 25px; margin-left: 23px; }
.recording .x { margin-left: 23px; }
.plain::after { display: none; }
.active { --surface: #2a5397; background: #2a5397; border-radius: 16px 16px 0 0; }
.active::before, .active::after {
  content: "";
  position: absolute;
  top: auto;
  bottom: 0;
  width: 16px;
  height: 16px;
}
.active::before { left: -16px; background: radial-gradient(circle at 0 0, transparent 15.5px, #2a5397 16px); }
.active::after { right: -16px; background: radial-gradient(circle at 100% 0, transparent 15.5px, #2a5397 16px); }
.plus { width: 24px; height: 24px; margin-left: 33px; }
.chev { width: 20px; height: 12px; margin-left: auto; }

.toolbar {
  height: 72px;
  flex: none;
  display: flex;
  align-items: center;
  background: #2a5397;
}
.nav { width: 216px; display: flex; gap: 36px; padding-left: 30px; }
.nav svg { width: 28px; height: 28px; }
.dim path { fill: none; stroke: #8c9fc6; stroke-width: 2.6; }
.omnibox {
  width: 3600px;
  height: 56px;
  display: flex;
  align-items: center;
  padding: 0 19px 0 23px;
  border-radius: 28px;
  background: #25436f;
  font-size: 28px;
}
.info { width: 28px; height: 28px; }
.scheme {
  width: 63px;
  height: 32px;
  line-height: 31px;
  margin-left: 17px;
  border-right: 2px solid #7c8ba5;
  color: #b9b9b9;
  letter-spacing: -0.3px;
}
.url { margin-left: 18px; letter-spacing: -0.27px; }
.share { width: 24px; height: 30px; margin-left: auto; }
.star { width: 34px; height: 34px; margin-left: 35px; }
.puzzle { width: 32px; height: 32px; margin-left: 28px; }
.panel { width: 28px; height: 28px; margin-left: 34px; }
.avatar {
  width: 44px;
  height: 44px;
  margin-left: 29px;
  border-radius: 50%;
  background: #4c31a3;
  font-size: 24px;
  line-height: 44px;
  text-align: center;
}
.more { width: 6px; height: 28px; margin-left: 38px; }

.bookmarks {
  height: 66px;
  flex: none;
  display: grid;
  grid-template-columns: 125px 168px 147px 176px 142px 143px 184px 142px auto;
  align-items: center;
  padding: 0 0 10px 29px;
  border-bottom: 2px solid #4f76b5;
  background: #2a5397;
  font-size: 24px;
  letter-spacing: -0.35px;
}
.bookmarks a { display: flex; align-items: center; gap: 16px; }
.bookmarks svg { width: 32px; height: 32px; }

/* quiz page */
.page { flex: 1; display: flex; flex-direction: column; align-items: center; }
.banner { width: 100%; height: 186px; background: #428559; text-align: center; }
h1 { margin: 2px 0 0; font-size: 78px; font-weight: 500; line-height: 96px; letter-spacing: -2.8px; -webkit-text-stroke: 0.6px #fff; }
p { margin: 1px 0 0; color: #212529; font-size: 32px; line-height: 48px; letter-spacing: -0.65px; }
button {
  width: 150px;
  height: 76px;
  margin-top: 31px;
  padding: 0;
  border: 0;
  border-radius: 12px;
  background: #f6c344;
  color: #000;
  font: 400 32px Inter, sans-serif;
  letter-spacing: -1.2px;
}

/* dock */
.dock {
  width: 3608px;
  height: 158px;
  flex: none;
  display: flex;
  align-items: flex-start;
  gap: 33px;
  margin: 2px auto 0;
  padding: 20px 0 0 21px;
  border: 2px solid #3d4b84;
  border-radius: 50px;
  background: linear-gradient(#19265d, #1a2d7d 65%, #1b2f84);
  box-shadow: 0 0 90px rgba(0, 0, 0, 0.22);
}
.app { position: relative; flex: none; width: 103px; height: 103px; }
.app svg { width: 103px; height: 103px; filter: drop-shadow(0 1px 1px rgba(0, 0, 0, 0.3)); }
.running::after {
  content: "";
  position: absolute;
  left: 47px;
  bottom: -29px;
  width: 8px;
  height: 8px;
  border-radius: 50%;
  background: #9aa9fb;
}
.app.tor svg { width: 110px; height: 110px; margin: -3px 0 0 -3px; }
.petals rect { mix-blend-mode: multiply; opacity: 0.9; }
.divider { width: 2px; height: 118px; margin: -2px 10px 0 13px; background: #4a5ca0; }
.app.folder { width: 107px; }
.app.folder svg { width: 107px; height: 92px; margin-top: 13px; }
.app.trash svg { width: 91px; height: 118px; margin: -9px 0 0 4px; }
```
